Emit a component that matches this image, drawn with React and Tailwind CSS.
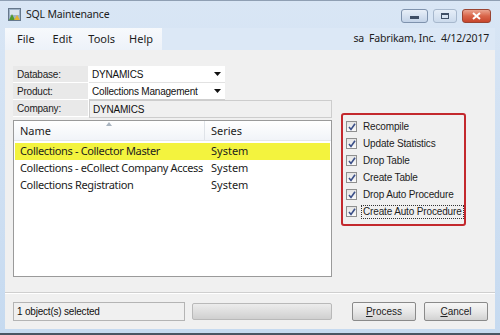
import clsx from 'clsx';

const UI = { fontFamily: '"Noto Sans", "Open Sans", sans-serif' };
const MS = { fontFamily: '"Liberation Sans", Arial, sans-serif' };

const items = [
  { name: 'Collections - Collector Master', series: 'System', selected: true },
  { name: 'Collections - eCollect Company Access', series: 'System' },
  { name: 'Collections Registration', series: 'System' },
];

const options = [
  'Recompile',
  'Update Statistics',
  'Drop Table',
  'Create Table',
  'Drop Auto Procedure',
  'Create Auto Procedure',
];

const AppIcon = () => (
  <svg width="13" height="13" viewBox="0 0 13 13">
    <rect x="0.5" y="0.5" width="12" height="12" fill="#9fb3c8" stroke="#66788c" />
    <rect x="2" y="2" width="9" height="5" fill="#d9e4ee" />
    <path d="M1 12 L4 6 L7 12 Z" fill="#4f9a2e" />
    <path d="M6 12 L9 7 L12 12 Z" fill="#e2b531" />
  </svg>
);

const DropArrow = () => (
  <svg width="7" height="4" viewBox="0 0 7 4" className="mr-[4px]">
    <path d="M0 0 H7 L3.5 4 Z" fill="#111" />
  </svg>
);

const Check = () => (
  <span className="w-[11px] h-[11px] shrink-0 border border-[#8f8f8f] bg-gradient-to-b from-[#e4e4e4] to-[#fafafa] flex items-center justify-center">
    <svg width="8" height="8" viewBox="0 0 8 8">
      <path d="M1 4 L3 6.5 L7 0.8" fill="none" stroke="#3b4f88" strokeWidth="1.6" />
    </svg>
  </span>
);

const FormRow = ({ label, children }) => (
  <div className="flex h-[17px]">
    <div className="w-[76px] bg-[#e9e9e9] border-r border-b border-white flex items-center pl-[4px] text-[10px] tracking-[-0.2px] text-[#222]">
      {label}
    </div>
    {children}
  </div>
);

const Button = ({ children, hot }) => (
  <button
    className="w-[64px] h-[19px] border border-[#8a8a8a] rounded-[2px] bg-gradient-to-b from-[#f6f6f6] via-[#e8e8e8] to-[#d2d2d2] text-[10px] text-[#222] flex items-center justify-center"
    style={MS}
  >
    <span>
      <span className="underline">{hot}</span>
      {children}
    </span>
  </button>
);

export default function App() {
  return (
    <div
      className="w-[500px] h-[335px] bg-gradient-to-b from-[#d9e6f5] to-[#c6daf0] border-t border-[#8f9fb3] border-b-2 border-b-[#4a5563] flex flex-col overflow-hidden"
      style={UI}
    >
      {/* title bar */}
      <div className="h-[27px] flex items-center pl-[8px] pr-[9px]">
        <AppIcon />
        <span className="ml-[5px] text-[10.5px] tracking-[-0.2px] text-[#1c1c1c]">SQL Maintenance</span>
        <div className="ml-auto flex items-center gap-[5px] mt-[2px]">
          <div className="w-[27px] h-[14px] rounded-[3px] border border-[#7e92ad] bg-gradient-to-b from-[#e8eff8] to-[#c3d3e8] flex items-end justify-center pb-[3px]">
            <span className="w-[9px] h-[3px] bg-[#3f4f66]" />
          </div>
          <div className="w-[24px] h-[14px] rounded-[3px] border border-[#a7b8cd] bg-gradient-to-b from-[#e6eef8] to-[#cbdaec] flex items-center justify-center">
            <span className="w-[8px] h-[6px] border border-[#3f4f66] border-t-2" />
          </div>
          <div className="w-[29px] h-[14px] rounded-[3px] border border-[#9a4432] bg-gradient-to-b from-[#eaa38f] via-[#d9654a] to-[#c8452c] flex items-center justify-center">
            <svg width="9" height="8" viewBox="0 0 9 8">
              <path d="M1 1 L8 7 M8 1 L1 7" stroke="#fff" strokeWidth="2" />
            </svg>
          </div>
        </div>
      </div>

      <div className="flex-1 flex flex-col mx-[5px] mb-[4px]">
        {/* menu bar */}
        <div className="h-[22px] flex items-center bg-[#dce8f6]">
          <div className="h-full w-[157px] bg-gradient-to-b from-[#f7f9fc] to-[#edf2f9] flex items-center text-[11px] text-[#1c1c1c]">
            <span className="ml-[12px]">File</span>
            <span className="ml-[18px]">Edit</span>
            <span className="ml-[16px]">Tools</span>
            <span className="ml-[14px]">Help</span>
          </div>
          <span className="ml-auto mr-[6px] text-[10.5px] tracking-[-0.2px] text-[#1c1c1c] whitespace-pre">
            sa  Fabrikam, Inc.  4/12/2017
          </span>
        </div>

        {/* body */}
        <div className="flex-1 bg-[#f0f0f0] flex flex-col">
          <div className="flex pl-[8px] pt-[16px]">
            <div className="w-[319px] flex flex-col" style={MS}>
              <FormRow label="Database:">
                <div className="w-[136px] bg-white border-b border-[#e2e2e2] flex items-center justify-between pl-[3px] text-[10px] tracking-[-0.2px] text-[#111]">
                  DYNAMICS
                  <DropArrow />
                </div>
              </FormRow>
              <FormRow label="Product:">
                <div className="w-[136px] bg-white border-b border-[#cfcfcf] flex items-center justify-between pl-[3px] text-[10px] tracking-[-0.2px] text-[#111]">
                  Collections Management
                  <DropArrow />
                </div>
              </FormRow>
              <FormRow label="Company:">
                <div className="flex-1 h-[18px] bg-[#f0f0f0] border border-[#cdcdcd] flex items-center pl-[3px] text-[10px] tracking-[-0.2px] text-[#111]">
                  DYNAMICS
                </div>
              </FormRow>

              {/* list */}
              <div className="mt-[3px] h-[157px] bg-white border border-[#9a9a9a] flex flex-col" style={UI}>
                <div className="h-[20px] flex bg-gradient-to-b from-white to-[#f1f4f8] border-b border-[#e3e6ea] text-[11px] text-[#1c1c1c]">
                  <div className="relative w-[191px] border-r border-[#dfe3e8] flex items-center pl-[6px] pt-[2px]">
                    Name
                    <svg width="6" height="4" viewBox="0 0 6 4" className="absolute left-[92px] top-[1px]">
                      <path d="M0 4 L3 0 L6 4 Z" fill="#a9b4c0" />
                    </svg>
                  </div>
                  <div className="flex items-center pl-[6px] pt-[2px]">Series</div>
                </div>
                {items.map((it) => (
                  <div
                    key={it.name}
                    className={clsx(
                      'h-[17px] mx-[1px] flex items-center text-[11px] text-[#1c1c1c]',
                      it.selected && 'bg-[#f3f33e] mt-[2px]'
                    )}
                  >
                    <span className="w-[190px] pl-[5px] tracking-[-0.35px] whitespace-nowrap">{it.name}</span>
                    <span className="pl-[6px]">{it.series}</span>
                  </div>
                ))}
              </div>
            </div>

            {/* options */}
            <div className="ml-[9px] mt-[47px] w-[125px] h-[113px] border-2 border-[#c3282d] rounded-[3px] flex flex-col pl-[3px] pt-[6px] gap-[6px]" style={MS}>
              {options.map((opt, i) => (
                <label key={opt} className="flex items-center h-[11px] text-[10px] tracking-[-0.15px] text-[#1c1c1c] whitespace-nowrap">
                  <Check />
                  <span
                    className={clsx(
                      'ml-[4px] leading-[12px] px-[1px]',
                      i === options.length - 1 ? 'border border-dotted border-[#333]' : 'border border-transparent'
                    )}
                  >
                    {opt}
                  </span>
                </label>
              ))}
            </div>
          </div>

          {/* separator */}
          <div className="mt-[15px] border-t border-[#cfcfcf] border-b border-b-white" />

          {/* bottom bar */}
          <div className="mt-[8px] flex items-center pl-[8px]" style={MS}>
            <div className="w-[172px] h-[19px] bg-[#f0f0f0] border border-[#b4b4b4] flex items-center pl-[3px] text-[10px] tracking-[-0.2px] text-[#111]">
              1 object(s) selected
            </div>
            <div className="ml-[7px] w-[140px] h-[17px] rounded-[2px] border border-[#b9b9b9] bg-gradient-to-b from-[#ececec] via-[#dedede] to-[#cfcfcf]" />
            <div className="ml-[20px] flex gap-[8px]">
              <Button hot="P">rocess</Button>
              <Button hot="C">ancel</Button>
            </div>
          </div>
        </div>
      </div>
    </div>
  );
}
